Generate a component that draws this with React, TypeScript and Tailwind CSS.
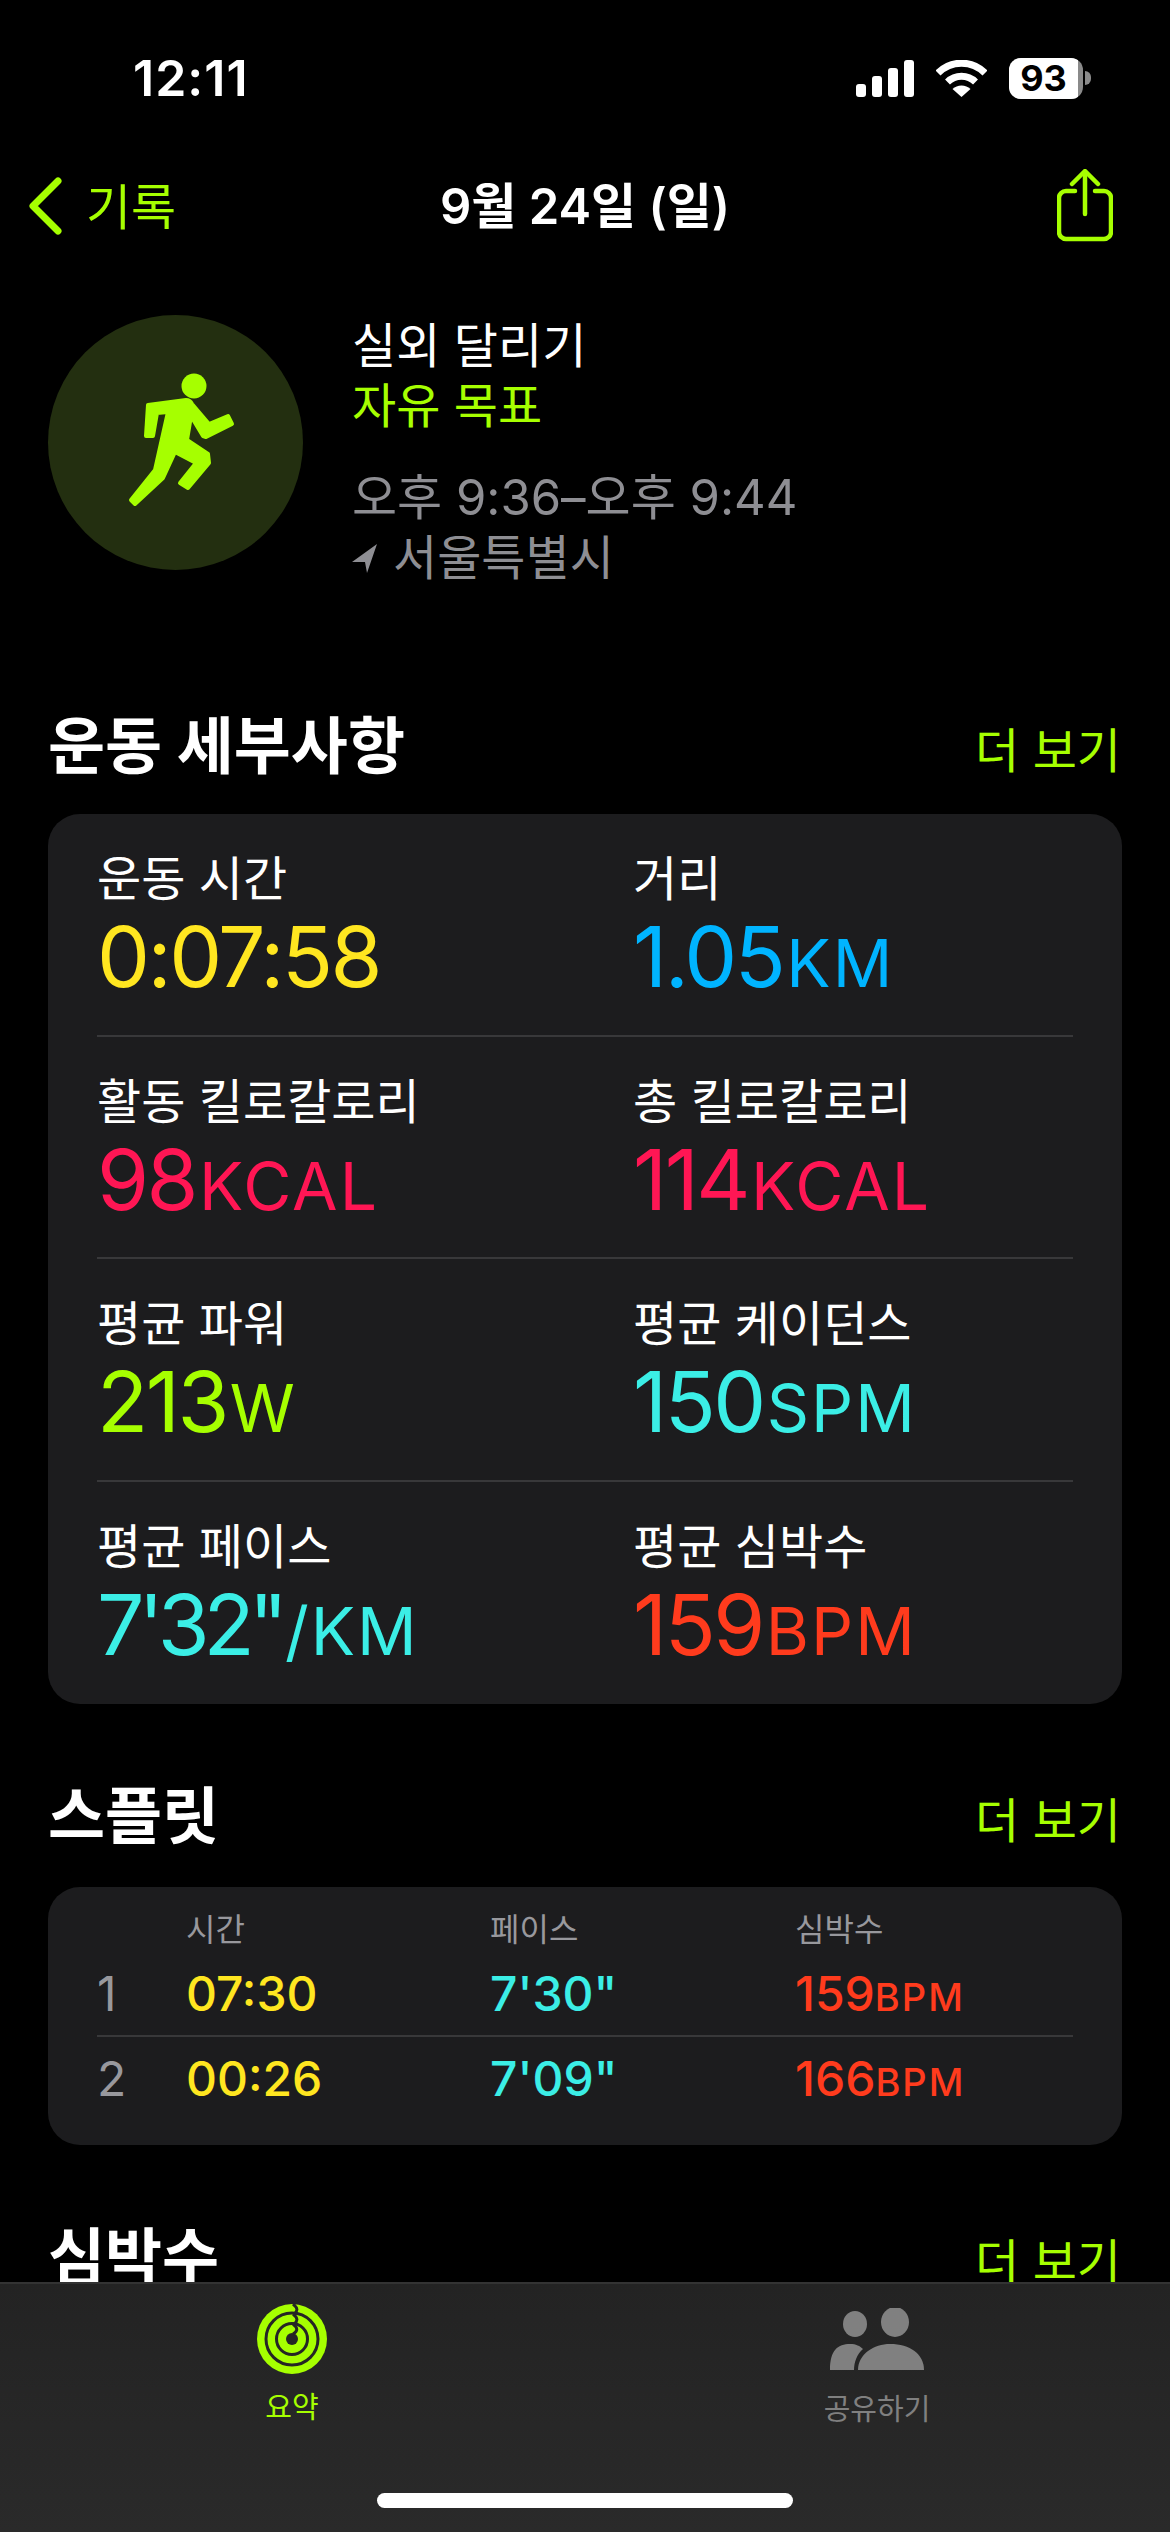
import React from "react";

const lime = "text-[#a6ff00]";

const StatusBar = () => (
  <div className="flex h-[156px] items-center justify-between pl-[133px] pr-[79px]">
    <span className="text-[50px] font-semibold leading-none tracking-[1px] text-white">12:11</span>
    <div className="flex items-center gap-[22px]">
      <svg width="58" height="37" viewBox="0 0 58 37" fill="#fff">
        <rect x="0" y="24" width="10" height="13" rx="3" />
        <rect x="16" y="16" width="10" height="21" rx="3" />
        <rect x="32" y="8" width="10" height="29" rx="3" />
        <rect x="48" y="0" width="10" height="37" rx="3" />
      </svg>
      <svg width="51" height="37" viewBox="0 0 51 37" fill="none" stroke="#fff" strokeWidth="7">
        <path d="M2 13 A33 33 0 0 1 49 13" />
        <path d="M11.5 22 A20 20 0 0 1 39.5 22" />
        <path d="M25.5 37 L16.5 29 A13 13 0 0 1 34.5 29 Z" fill="#fff" stroke="none" />
      </svg>
      <div className="flex items-center gap-[2px]">
        <div className="h-[41px] w-[74px] overflow-hidden rounded-[12px] bg-[#8a8a8a]">
          <div className="flex h-full w-[69px] items-center justify-center bg-white text-[36px] font-bold leading-none text-black">
            93
          </div>
        </div>
        <div className="h-[14px] w-[6px] rounded-r-full bg-[#8a8a8a]" />
      </div>
    </div>
  </div>
);

const NavBar = () => (
  <div className="relative flex h-[100px] items-center justify-between pl-[28px] pr-[57px]">
    <div className="flex items-center gap-[24px]">
      <svg width="34" height="58" viewBox="0 0 34 58" fill="none" stroke="#a6ff00" strokeWidth="7" strokeLinecap="round" strokeLinejoin="round">
        <path d="M30 4 L5 29 L30 54" />
      </svg>
      <span className={`pt-[2px] text-[49px] leading-none ${lime}`}>기록</span>
    </div>
    <span className="absolute left-0 right-0 text-center text-[49px] font-semibold leading-none text-white">
      9월 24일 (일)
    </span>
    <svg width="56" height="74" viewBox="0 0 56 74" fill="none" stroke="#a6ff00" strokeWidth="4.5" strokeLinecap="round" strokeLinejoin="round">
      <path d="M18 22 H9 A7 7 0 0 0 2 29 V63 A7 7 0 0 0 9 70 H47 A7 7 0 0 0 54 63 V29 A7 7 0 0 0 47 22 H38" />
      <path d="M28 45 V3" />
      <path d="M15 15 L28 2 L41 15" />
    </svg>
  </div>
);

// drawn in the circle's own coordinates, so the figure sits off-centre like the original
const RunnerIcon = () => (
  <svg width="255" height="255" viewBox="48 315 255 255">
    <ellipse cx="194" cy="386" rx="12.5" ry="12.5" fill="#a6ff00" />
    <path
      d="M148 405 L186 400 Q190 400 192 404 L209 424 L228 416 L232 424 L206 437 L203 436 L191 416 L187 440 L208 454 L209 463 L188 488 L180 483 L196 463 L175 452 L163 478 L135 504 L131 500 L155 470 L168 412 L157 413 L153 436 L146 436 Z"
      fill="#a6ff00"
      stroke="#a6ff00"
      strokeWidth="4"
      strokeLinejoin="round"
    />
  </svg>
);

const WorkoutHeader = () => (
  <div className="flex gap-[49px] pl-[48px] pt-[59px]">
    <div className="h-[255px] w-[255px] rounded-full bg-[#232f10]">
      <RunnerIcon />
    </div>
    <div className="pt-[1px] text-[48px] leading-[60px]">
      <div className="text-white">실외 달리기</div>
      <div className={lime}>자유 목표</div>
      <div className="mt-[32px] text-[49px] text-[#8e8e93]">오후 9:36–오후 9:44</div>
      <div className="flex items-center gap-[15px] text-[#8e8e93]">
        <svg width="26" height="30" viewBox="0 0 26 30" fill="#8e8e93">
          <path d="M25 1 L0 19 L13 19 L15 30 Z" />
        </svg>
        서울특별시
      </div>
    </div>
  </div>
);

const SectionHeader = ({ title }: { title: string }) => (
  <div className="flex items-center justify-between pl-[48px] pr-[49px]">
    <span className="text-[62px] font-bold leading-[80px] text-white">{title}</span>
    <span className={`pt-[8px] text-[48px] leading-[60px] ${lime}`}>더 보기</span>
  </div>
);

const metrics = [
  [
    { label: "운동 시간", value: "0:07:58", unit: "", color: "text-[#ffe620]" },
    { label: "거리", value: "1.05", unit: "KM", color: "text-[#00b4ff]" },
  ],
  [
    { label: "활동 킬로칼로리", value: "98", unit: "KCAL", color: "text-[#ff1654]" },
    { label: "총 킬로칼로리", value: "114", unit: "KCAL", color: "text-[#ff1654]" },
  ],
  [
    { label: "평균 파워", value: "213", unit: "W", color: "text-[#a6ff00]" },
    { label: "평균 케이던스", value: "150", unit: "SPM", color: "text-[#3beee6]" },
  ],
  [
    { label: "평균 페이스", value: "7'32\"", unit: "/KM", color: "text-[#3beee6] tracking-[-6px]" },
    { label: "평균 심박수", value: "159", unit: "BPM", color: "text-[#ff3b1d]" },
  ],
];

const MetricsCard = () => (
  <div className="mx-[48px] mt-[27px] rounded-[32px] bg-[#1c1c1e] px-[49px]">
    {metrics.map((row, i) => (
      <div key={i} className={`grid h-[222.5px] grid-cols-[536px_1fr] pt-[35px] ${i < 3 ? "border-b-2 border-[#38383a]" : ""}`}>
        {row.map((m) => (
          <div key={m.label} className="tracking-[-2.5px]">
            <div className="text-[48px] leading-[60px] tracking-normal text-white">{m.label}</div>
            <div className={`mt-[2px] text-[84px] leading-[92px] ${m.color}`}>
              {m.value}
              <span className="ml-[3px] text-[66px] tracking-[2px]">{m.unit}</span>
            </div>
          </div>
        ))}
      </div>
    ))}
  </div>
);

const splits = [
  { n: "1", time: "07:30", pace: "7'30\"", hr: "159" },
  { n: "2", time: "00:26", pace: "7'09\"", hr: "166" },
];

const SplitsCard = () => (
  <div className="mx-[48px] mt-[30px] h-[258px] rounded-[32px] bg-[#1c1c1e] px-[49px] pt-[23px]">
    <div className="mb-[3px] grid grid-cols-[89px_304px_305px_1fr] text-[32px] leading-[40px] text-[#98989d]">
      <span />
      <span>시간</span>
      <span>페이스</span>
      <span>심박수</span>
    </div>
    {splits.map((s, i) => (
      <div
        key={s.n}
        className={`grid h-[84px] grid-cols-[89px_304px_305px_1fr] items-center text-[48px] font-medium ${i === 0 ? "border-b-2 border-[#38383a]" : ""}`}
      >
        <span className="font-normal text-[#98989d]">{s.n}</span>
        <span className="text-[#ffe620]">{s.time}</span>
        <span className="text-[#3beee6]">{s.pace}</span>
        <span className="text-[#ff3b1d]">
          {s.hr}
          <span className="text-[38px] tracking-[2px]">BPM</span>
        </span>
      </div>
    ))}
  </div>
);

const TabBar = () => (
  <div className="absolute bottom-0 left-0 right-0 h-[250px] border-t-2 border-[#333] bg-linear-to-b from-[#232323] to-[#2a2a2a]">
    <div className="absolute left-[257px] top-[20px] flex w-[70px] flex-col items-center">
      <svg width="70" height="70" viewBox="0 0 70 70">
        <circle cx="35" cy="35" r="35" fill="#a6ff00" />
        <circle cx="35" cy="35" r="26" fill="none" stroke="#252525" strokeWidth="3" />
        <circle cx="35" cy="35" r="15.5" fill="none" stroke="#252525" strokeWidth="3" />
        <circle cx="35" cy="35" r="6" fill="#252525" />
        <path d="M36 0 C41 4 41 7 37 10 M36 10 C41 14 41 17 37 20 M36 20 C41 24 41 27 36 30" fill="none" stroke="#252525" strokeWidth="3" />
      </svg>
      <span className="mt-[16px] whitespace-nowrap text-[29px] leading-[36px] text-[#a6ff00]">요약</span>
    </div>
    <div className="absolute left-[827px] top-[24px] flex w-[100px] flex-col items-center">
      <svg width="94" height="64" viewBox="0 0 94 64" fill="#808080">
        <ellipse cx="25" cy="16" rx="12" ry="13" />
        <ellipse cx="65" cy="14" rx="14" ry="15" />
        <path d="M0 62 C0 42 8 36 20 36 C26 36 30 38 33 41 C27 46 24 54 24 62 Z" />
        <path d="M28 62 C28 46 44 36 60 36 C80 36 94 46 94 62 Z" />
      </svg>
      <span className="mt-[20px] whitespace-nowrap text-[29px] leading-[36px] text-[#808080]">공유하기</span>
    </div>
    <div className="absolute bottom-[24px] left-[377px] h-[15px] w-[416px] rounded-full bg-white" />
  </div>
);

export default function App() {
  return (
    <div className="relative h-[2532px] w-[1170px] overflow-hidden bg-black font-['Inter','Noto_Sans_CJK_KR',sans-serif]">
      <StatusBar />
      <NavBar />
      <WorkoutHeader />
      <div className="mt-[119px]">
        <SectionHeader title="운동 세부사항" />
      </div>
      <MetricsCard />
      <div className="mt-[73px]">
        <SectionHeader title="스플릿" />
      </div>
      <SplitsCard />
      <div className="mt-[73px]">
        <SectionHeader title="심박수" />
      </div>
      <TabBar />
    </div>
  );
}
